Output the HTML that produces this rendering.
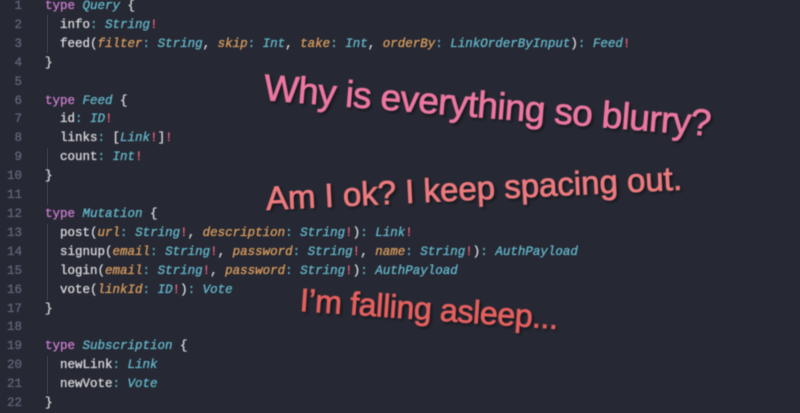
<!DOCTYPE html>
<html><head><meta charset="utf-8"><style>
html,body{margin:0;padding:0;}
body{width:800px;height:400px;background:#262833;overflow:hidden;position:relative;font-family:"Liberation Mono",monospace;}
.code{position:absolute;left:0;top:-3px;font-size:12.5px;line-height:18.9px;color:#d4d4d8;filter:blur(0.5px);white-space:pre;-webkit-text-stroke:0.35px currentColor;}
.ln{display:inline-block;width:22px;text-align:right;color:#5f6477;margin-right:23px;}
.k{color:#c47ac8}.t{color:#62b3c6;font-style:italic}.a{color:#d49a5c;font-style:italic}.e{color:#e0607a}.p{color:#5fa8bb}
.guide{position:absolute;left:47px;width:1px;background:#3a3d4a;}
.msg{position:absolute;font-family:"Liberation Sans",sans-serif;white-space:nowrap;transform-origin:left center;text-shadow:2px 2px 3px rgba(0,0,0,.6);filter:blur(0.4px);-webkit-text-stroke:0.8px currentColor;}
</style></head><body>
<div class="guide" style="top:15px;height:38px"></div>
<div class="guide" style="top:148px;height:57px"></div>
<div class="guide" style="top:224px;height:76px"></div>
<div class="guide" style="top:356px;height:38px"></div>
<div class="code"><span class="ln">1</span><span class="k">type</span> <span class="t">Query</span> {
<span class="ln">2</span>  info<span class="p">:</span> <span class="t">String</span><span class="e">!</span>
<span class="ln">3</span>  feed(<span class="a">filter</span><span class="p">:</span> <span class="t">String</span>, <span class="a">skip</span><span class="p">:</span> <span class="t">Int</span>, <span class="a">take</span><span class="p">:</span> <span class="t">Int</span>, <span class="a">orderBy</span><span class="p">:</span> <span class="t">LinkOrderByInput</span>)<span class="p">:</span> <span class="t">Feed</span><span class="e">!</span>
<span class="ln">4</span>}
<span class="ln">5</span>
<span class="ln">6</span><span class="k">type</span> <span class="t">Feed</span> {
<span class="ln">7</span>  id<span class="p">:</span> <span class="t">ID</span><span class="e">!</span>
<span class="ln">8</span>  links<span class="p">:</span> [<span class="t">Link</span><span class="e">!</span>]<span class="e">!</span>
<span class="ln">9</span>  count<span class="p">:</span> <span class="t">Int</span><span class="e">!</span>
<span class="ln">10</span>}
<span class="ln">11</span>
<span class="ln">12</span><span class="k">type</span> <span class="t">Mutation</span> {
<span class="ln">13</span>  post(<span class="a">url</span><span class="p">:</span> <span class="t">String</span><span class="e">!</span>, <span class="a">description</span><span class="p">:</span> <span class="t">String</span><span class="e">!</span>)<span class="p">:</span> <span class="t">Link</span><span class="e">!</span>
<span class="ln">14</span>  signup(<span class="a">email</span><span class="p">:</span> <span class="t">String</span><span class="e">!</span>, <span class="a">password</span><span class="p">:</span> <span class="t">String</span><span class="e">!</span>, <span class="a">name</span><span class="p">:</span> <span class="t">String</span><span class="e">!</span>)<span class="p">:</span> <span class="t">AuthPayload</span>
<span class="ln">15</span>  login(<span class="a">email</span><span class="p">:</span> <span class="t">String</span><span class="e">!</span>, <span class="a">password</span><span class="p">:</span> <span class="t">String</span><span class="e">!</span>)<span class="p">:</span> <span class="t">AuthPayload</span>
<span class="ln">16</span>  vote(<span class="a">linkId</span><span class="p">:</span> <span class="t">ID</span><span class="e">!</span>)<span class="p">:</span> <span class="t">Vote</span>
<span class="ln">17</span>}
<span class="ln">18</span>
<span class="ln">19</span><span class="k">type</span> <span class="t">Subscription</span> {
<span class="ln">20</span>  newLink<span class="p">:</span> <span class="t">Link</span>
<span class="ln">21</span>  newVote<span class="p">:</span> <span class="t">Vote</span>
<span class="ln">22</span>}</div>
<div class="msg" style="left:264px;top:67px;font-size:37px;color:#ec77a0;transform:rotate(4.6deg);letter-spacing:-0.6px">Why is everything so blurry?</div>
<div class="msg" style="left:266px;top:180px;font-size:33px;color:#ec7a7e;transform:rotate(-2.8deg);letter-spacing:0px">Am I ok? I keep spacing out.</div>
<div class="msg" style="left:300px;top:282px;font-size:32px;color:#e4605f;transform:rotate(4deg);letter-spacing:-0.3px">I’m falling asleep...</div>
</body></html>
